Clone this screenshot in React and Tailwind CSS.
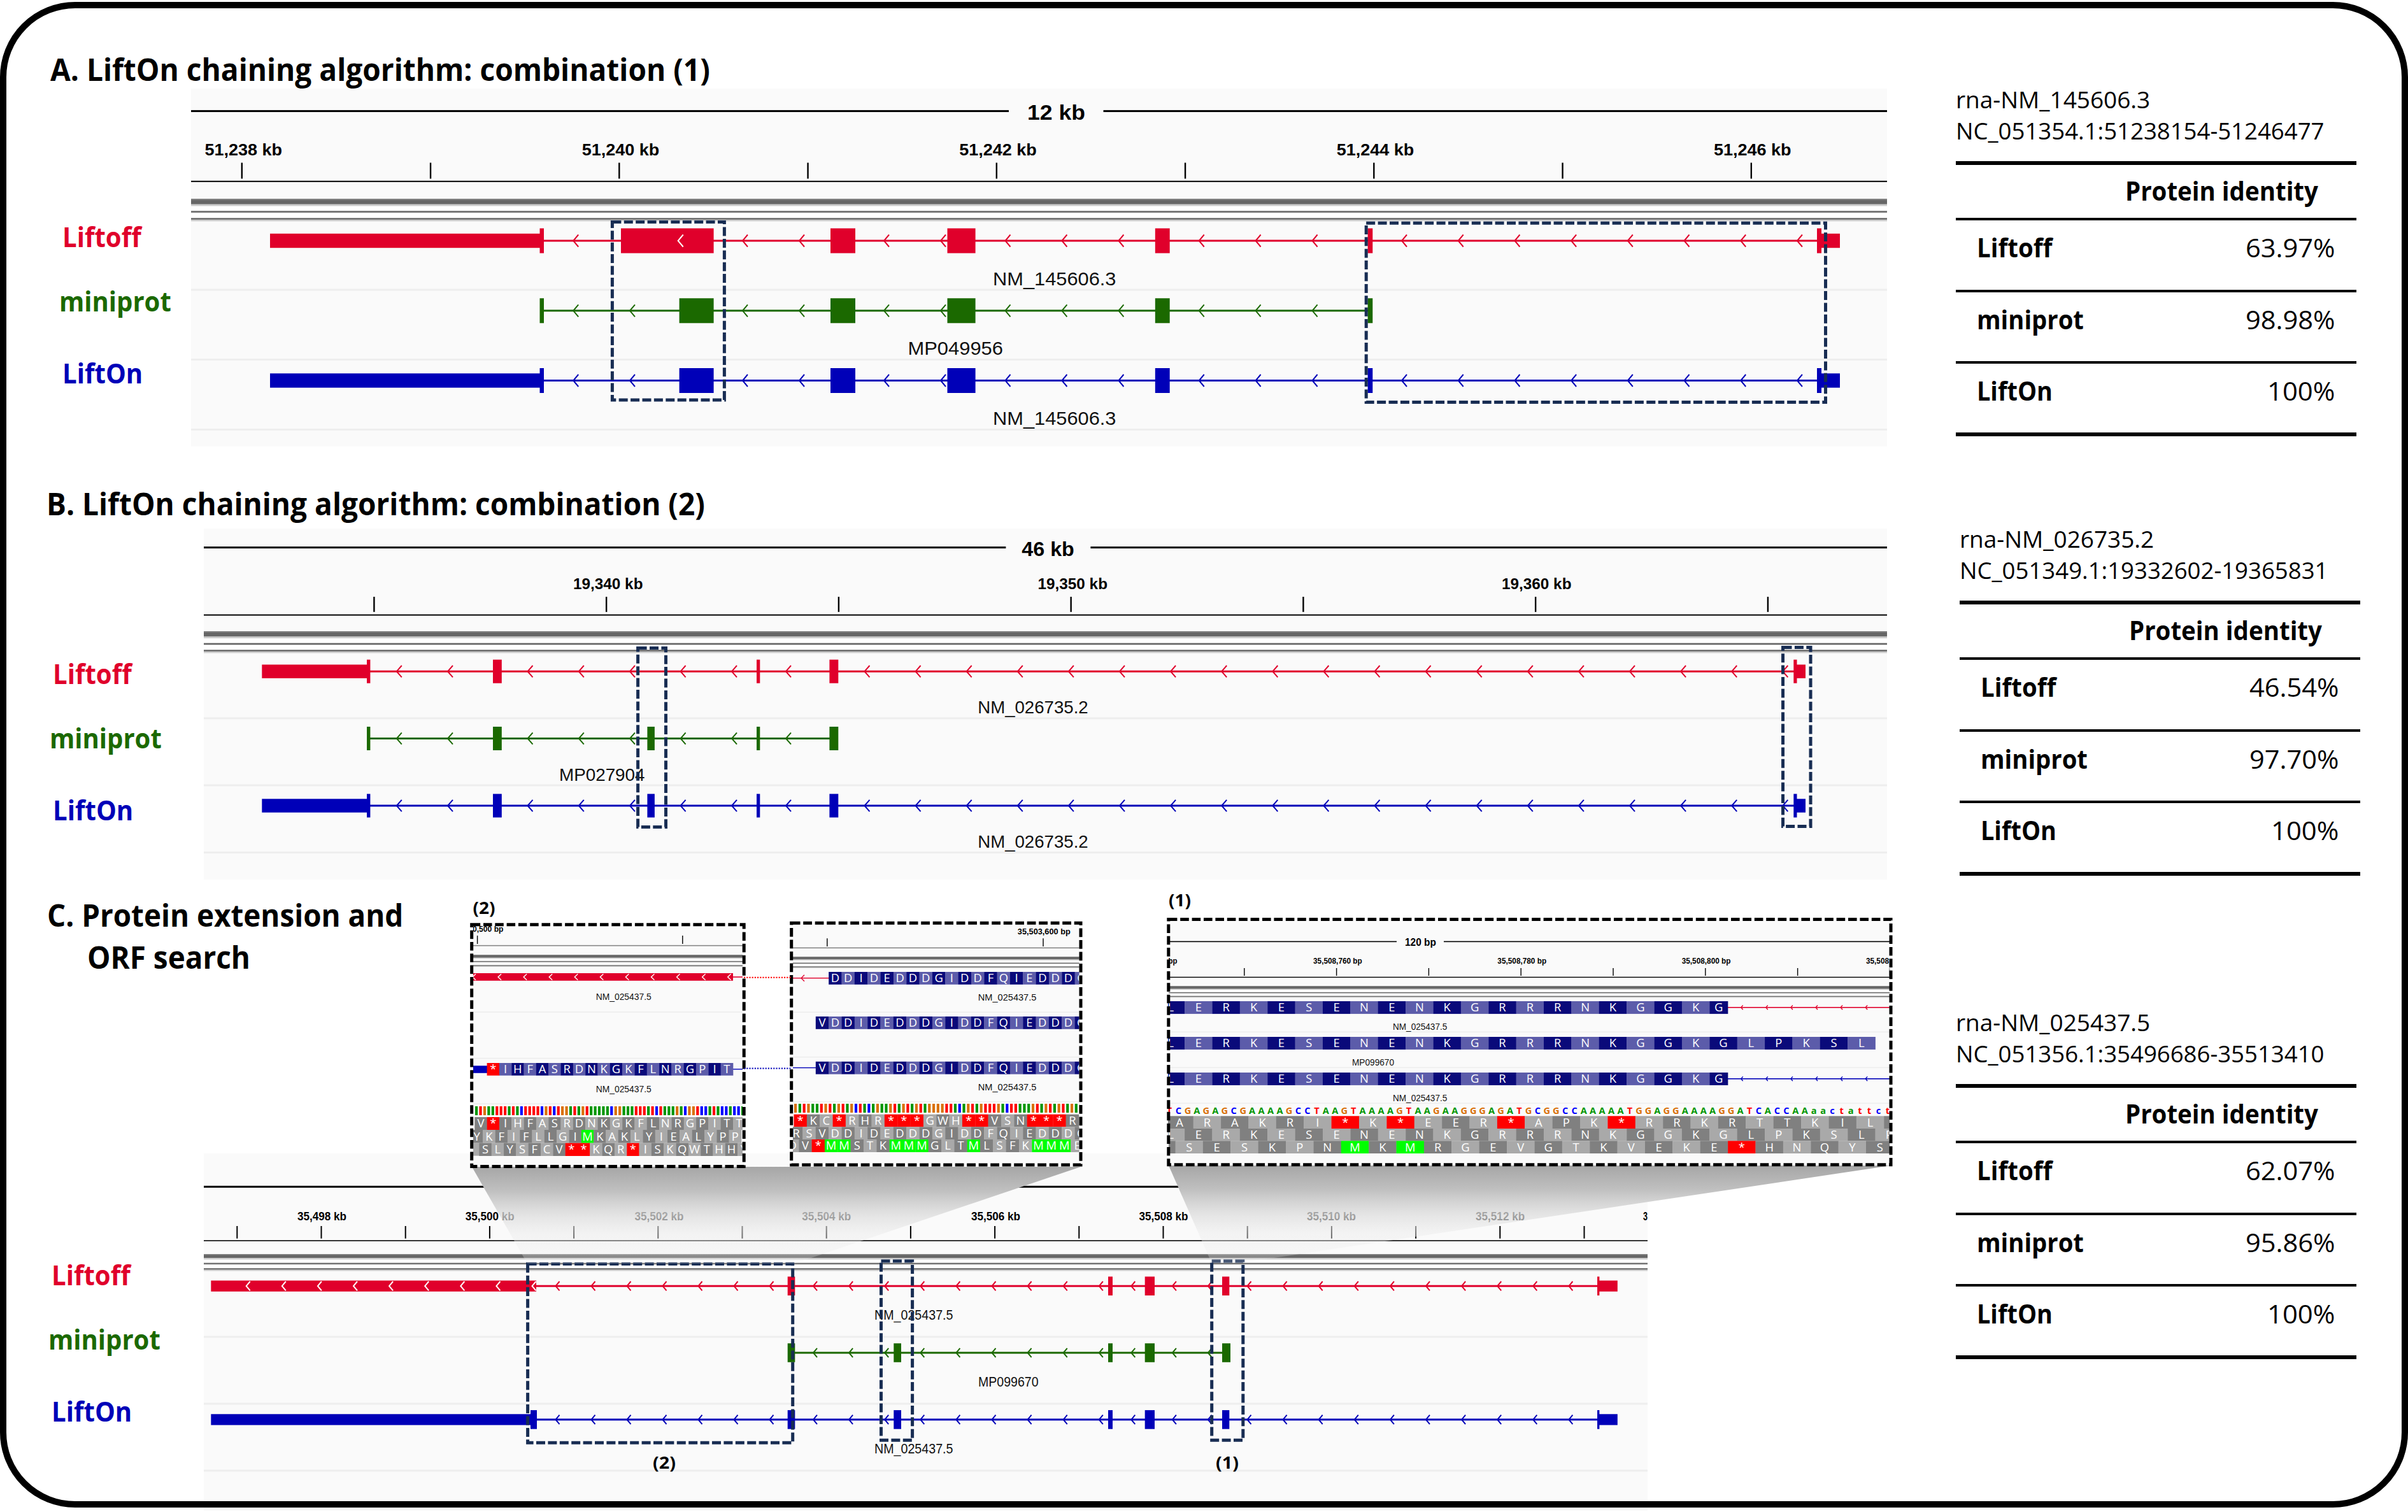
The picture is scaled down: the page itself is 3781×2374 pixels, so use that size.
import React, { useLayoutEffect, useRef, useState } from 'react';

const RED = '#e0002b';
const GREEN = '#1b6900';
const BLUE = '#0000b8';
const NAVY = '#182d53';

const BASE_COLORS = { A: '#009600', C: '#0000ff', G: '#d97008', T: '#ff0000' };

const series = (start, step, count) => Array.from({ length: count }, (_, i) => start + i * step);

// Condenses a label so that it takes up exactly the given width
const Fit = ({ width, className = '', children }) => {
    const ref = useRef(null);
    const [scale, setScale] = useState(1);

    useLayoutEffect(() => {
        setScale(width / ref.current.offsetWidth);
    }, [width, children]);

    return (
        <span className="inline-block whitespace-nowrap" style={{ width }}>
            <span ref={ref} className={`inline-block origin-left ${className}`} style={{ transform: `scaleX(${scale})` }}>
                {children}
            </span>
        </span>
    );
};

const Label = ({ x, y, w, size, bold, children }) => (
    <text
        x={x}
        y={y}
        fontSize={size}
        textLength={w}
        lengthAdjust="spacingAndGlyphs"
        className={bold ? "font-['Liberation_Sans',sans-serif] font-bold" : "font-['Liberation_Sans',sans-serif]"}
        fill={bold ? '#000' : '#111'}
    >
        {children}
    </text>
);

const Note = ({ x, y, w, children }) => (
    <text x={x} y={y} fontSize={27} textLength={w} lengthAdjust="spacingAndGlyphs" className="font-['Open_Sans',sans-serif] font-bold">
        {children}
    </text>
);

const HLine = ({ x1, x2, y, w = 2, color = '#000' }) => (
    <rect x={x1} y={y - w / 2} width={x2 - x1} height={w} fill={color} />
);

const Ticks = ({ xs, y1, y2, w = 2.4 }) =>
    xs.map((x) => <rect key={x} x={x - w / 2} y={y1} width={w} height={y2 - y1} fill="#000" />);

// Grey splitter bars between the ruler and the tracks
const Bars = ({ x1, x2, top, thick, second, third, w = 3 }) => (
    <g>
        <rect x={x1} y={top} width={x2 - x1} height={third - top} fill="#fff" />
        <rect x={x1} y={top} width={x2 - x1} height={thick + w} fill="#ccc" />
        <rect x={x1} y={top} width={x2 - x1} height={thick} fill="#666" />
        <rect x={x1} y={top} width={x2 - x1} height={thick / 4} fill="#828282" />
        <HLine x1={x1} x2={x2} y={second} w={w + 0.6} color="#bbb" />
        <HLine x1={x1} x2={x2} y={second} w={w / 1.8} color="#555" />
        <HLine x1={x1} x2={x2} y={third + w / 2} w={w * 1.6} color="#ccc" />
        <HLine x1={x1} x2={x2} y={third} w={w * 0.8} color="#666" />
    </g>
);

const Arrows = ({ xs, y, w, h, color, stroke = 2 }) =>
    xs.map((x) => (
        <path key={x} d={`M${x + w} ${y - h} L${x + 1} ${y} L${x + w} ${y + h}`} fill="none" stroke={color} strokeWidth={stroke} />
    ));

const Track = ({ y, color, line, utr = [], cds, arrows, white = [], uh, ch, aw, ah }) => (
    <g>
        <HLine x1={line[0]} x2={line[1]} y={y} w={3} color={color} />
        <Arrows xs={arrows} y={y} w={aw} h={ah} color={color} />
        {utr.map(([a, b]) => (
            <rect key={a} x={a} y={y - uh} width={b - a} height={uh * 2} fill={color} />
        ))}
        {cds.map(([a, b]) => (
            <rect key={a} x={a} y={y - ch} width={b - a} height={ch * 2} fill={color} />
        ))}
        <Arrows xs={white} y={y} w={aw} h={ah} color="#fff" />
    </g>
);

const DashBox = ({ x1, y1, x2, y2, color = NAVY, dash = '14 4.4', w = 5 }) => (
    <rect x={x1} y={y1} width={x2 - x1} height={y2 - y1} fill="none" stroke={color} strokeWidth={w} strokeDasharray={dash} />
);

// Amino acid cells; "*" is a stop codon, "M" a start codon in the frame rows
const Cells = ({ x, y, h, pitch, seq, colors, frame, lastWidth }) =>
    seq.split('').map((aa, i) => {
        const width = lastWidth && i === seq.length - 1 ? lastWidth : pitch;
        let fill = colors[i % 2];
        if (aa === '*') fill = '#ff0000';
        if (frame && aa === 'M') fill = '#00ff00';
        return (
            <g key={i}>
                <rect x={x + i * pitch} y={y} width={width + 0.3} height={h} fill={fill} />
                <text
                    x={x + i * pitch + width / 2}
                    y={y + h / 2 + 6.4}
                    fontSize={18.4}
                    textAnchor="middle"
                    fill="#fff"
                    className="font-['Open_Sans',sans-serif] font-medium"
                >
                    {aa}
                </text>
            </g>
        );
    });

const NAVY_CELLS = ['#0a0a7a', '#5c5caa'];
const DARK_FIRST = ['#808080', '#a9a9a9'];
const LIGHT_FIRST = ['#a9a9a9', '#808080'];

const BaseTicks = ({ x, y, h, pitch, seq }) =>
    seq.split('').map((b, i) => (
        <rect key={i} x={x + i * pitch} y={y} width={4.2} height={h} fill={BASE_COLORS[b]} />
    ));

const RowLines = ({ x1, x2, ys, w = 3 }) => ys.map((y) => <HLine key={y} x1={x1} x2={x2} y={y} w={w} color="#eeeeee" />);

/* ---------- Panel A ---------- */

const A_LEFT = [899.2];
const A_MID = [1165, 1254, 1387, 1476, 1577.5, 1666.4, 1755.4, 1881.7, 1970.6, 2059.6];
const A_RIGHT = series(2200, 88.7, 8);
const A_CDS = [[1304, 1343], [1487.5, 1531.6], [1813.8, 1836.7], [2147.6, 2155.3]];
const A_SIZE = { uh: 11.2, ch: 19.5, aw: 9, ah: 9.5 };

const PanelA = () => (
    <svg viewBox="300 139 2663 562" className="block h-[562px] w-[2663px] shrink-0">
        <rect x={300} y={139} width={2663} height={562} fill="#fafafa" />
        <HLine x1={300} x2={1584} y={174.4} w={3} />
        <HLine x1={1732.5} x2={2963} y={174.4} w={3} />
        <Label x={1613} y={188} w={91} size={34} bold>12 kb</Label>
        {[['51,238 kb', 321.5], ['51,240 kb', 913.8], ['51,242 kb', 1506.3], ['51,244 kb', 2098.8], ['51,246 kb', 2691]].map(([t, x]) => (
            <Label key={t} x={x} y={243.6} w={121.5} size={26} bold>{t}</Label>
        ))}
        <Ticks xs={series(379.8, 296.25, 9)} y1={255.5} y2={280.5} />
        <HLine x1={300} x2={2963} y={284.8} w={2} />
        <Bars x1={300} x2={2963} top={312} thick={8.5} second={332.5} third={343.5} />
        <RowLines x1={300} x2={2963} ys={[455, 564.6, 674.5]} />

        <Track
            y={378}
            color={RED}
            line={[850, 2870]}
            utr={[[424, 850], [2859, 2889]]}
            cds={[[847.5, 854], [975, 1120.6], ...A_CDS, [2853, 2860]]}
            arrows={[...A_LEFT, ...A_MID, ...A_RIGHT]}
            white={[1063.7]}
            {...A_SIZE}
        />
        <Track
            y={487.8}
            color={GREEN}
            line={[850, 2150]}
            cds={[[847.5, 854], [1066.6, 1120.6], ...A_CDS]}
            arrows={[...A_LEFT, 988, ...A_MID]}
            {...A_SIZE}
        />
        <Track
            y={597.5}
            color={BLUE}
            line={[850, 2870]}
            utr={[[424, 850], [2859, 2889]]}
            cds={[[847.5, 854], [1066.6, 1120.6], ...A_CDS, [2853, 2860]]}
            arrows={[...A_LEFT, 988, ...A_MID, ...A_RIGHT]}
            {...A_SIZE}
        />
        <Label x={1559} y={447.5} w={193.5} size={30}>NM_145606.3</Label>
        <Label x={1425.5} y={556.7} w={149.5} size={30}>MP049956</Label>
        <Label x={1559} y={667} w={193.5} size={30}>NM_145606.3</Label>
        <DashBox x1={961.4} y1={348.5} x2={1137.4} y2={628} />
        <DashBox x1={2145.2} y1={350.3} x2={2866.5} y2={631.4} />
    </svg>
);

/* ---------- Panel B ---------- */

const B_LEFT = [621.8, 702, 827.5, 907.8, 988, 1067.6, 1148, 1233];
const B_RIGHT = series(1356.5, 80.1, 19);
const B_CDS = [[576, 581.4], [774, 787.8], [1188, 1193.3], [1302.4, 1316.3]];
const B_SIZE = { uh: 10.7, ch: 18.5, aw: 9, ah: 9.2 };

const PanelB = () => (
    <svg viewBox="320 830 2643 551" className="block h-[551px] w-[2643px] shrink-0">
        <rect x={320} y={830} width={2643} height={551} fill="#fafafa" />
        <HLine x1={320} x2={1579.4} y={859.6} w={3} />
        <HLine x1={1712.4} x2={2963} y={859.6} w={3} />
        <Label x={1604.3} y={872.7} w={82.5} size={31} bold>46 kb</Label>
        {[['19,340 kb', 900], ['19,350 kb', 1629.5], ['19,360 kb', 2358]].map(([t, x]) => (
            <Label key={t} x={x} y={925.4} w={109.5} size={24} bold>{t}</Label>
        ))}
        <Ticks xs={series(587.4, 364.75, 7)} y1={937} y2={960.8} />
        <HLine x1={320} x2={2963} y={965.6} w={2} />
        <Bars x1={320} x2={2963} top={991} thick={8.2} second={1011} third={1021.5} />
        <RowLines x1={320} x2={2963} ys={[1127.8, 1233, 1338.5]} />

        <Track
            y={1054.2}
            color={RED}
            line={[578, 2820]}
            utr={[[411.3, 580], [2819, 2835]]}
            cds={[...B_CDS, [2816.3, 2821.5]]}
            arrows={[...B_LEFT, ...B_RIGHT]}
            {...B_SIZE}
        />
        <Track y={1159.5} color={GREEN} line={[578, 1310]} cds={[...B_CDS, [1016.4, 1027.9]]} arrows={B_LEFT} {...B_SIZE} />
        <Track
            y={1265}
            color={BLUE}
            line={[578, 2820]}
            utr={[[411.3, 580], [2819, 2835]]}
            cds={[...B_CDS, [1016.4, 1027.9], [2816.3, 2821.5]]}
            arrows={[...B_LEFT, ...B_RIGHT]}
            {...B_SIZE}
        />
        <Label x={1535.2} y={1120.3} w={173.5} size={28}>NM_026735.2</Label>
        <Label x={878} y={1225.7} w={134.5} size={28}>MP027904</Label>
        <Label x={1535.2} y={1330.8} w={173.5} size={28}>NM_026735.2</Label>
        <DashBox x1={1001.6} y1={1017.4} x2={1045.5} y2={1298.5} />
        <DashBox x1={2799.5} y1={1016.4} x2={2843} y2={1297.6} />
    </svg>
);

/* ---------- Panel C ---------- */

const C_ARROWS_1 = series(871.5, 56, 7);
const C_ARROWS_2 = [...series(1276, 56.1, 9), 1775.3, 1839.9, 1895.8];
const C_ARROWS_3 = series(1957.5, 56.1, 10);
const C_SIZE = { uh: 8.6, ch: 14.8, aw: 7, ah: 7.2 };

const GenomeView = () => (
    <g>
        <rect x={320} y={1811} width={2267} height={561} fill="#fafafa" />
        <HLine x1={320} x2={2587} y={1863.3} w={3} />
        {[505.4, 769.3, 1034.9, 1297.8, 1563.5, 1827, 2090.4, 2355.6].map((c, i) => (
            <Label key={c} x={c - 38.5} y={1916.4} w={77} size={19.2} bold>{`35,${498 + i * 2} kb`}</Label>
        ))}
        <Label x={2580} y={1916.4} w={7} size={19.2} bold>3</Label>
        <Ticks xs={series(372.3, 132.2, 17)} y1={1925} y2={1944.6} w={2} />
        <HLine x1={320} x2={2587} y={1948} w={2} color="#333" />
        <Bars x1={320} x2={2587} top={1969} thick={6} second={1984} third={1992.3} w={2.5} />
        <RowLines x1={320} x2={2587} ys={[2099, 2204, 2309]} />

        <Track
            y={2019.2}
            color={RED}
            line={[840, 2512]}
            utr={[[331.3, 842], [2510.5, 2539.8]]}
            cds={[[1236.7, 1248.3], [1740, 1747], [1797.7, 1813], [1919, 1930.3], [2508, 2511.4]]}
            arrows={[...C_ARROWS_1, ...C_ARROWS_2, ...C_ARROWS_3]}
            white={series(385.7, 56.1, 9)}
            {...C_SIZE}
        />
        <Track
            y={2124}
            color={GREEN}
            line={[1240, 1925]}
            cds={[[1236.7, 1248.3], [1403.3, 1415], [1740, 1747], [1797.7, 1813], [1919, 1932]]}
            arrows={C_ARROWS_2}
            {...C_SIZE}
        />
        <Track
            y={2228.9}
            color={BLUE}
            line={[840, 2512]}
            utr={[[331.3, 842], [2510.5, 2539.8]]}
            cds={[[833, 843], [1236.7, 1248.3], [1403.3, 1415], [1740, 1747], [1797.7, 1813], [1919, 1930.3], [2508, 2511.4]]}
            arrows={[...C_ARROWS_1, ...C_ARROWS_2, ...C_ARROWS_3]}
            {...C_SIZE}
        />
        <Label x={1373} y={2071.7} w={123.5} size={21.5}>NM_025437.5</Label>
        <Label x={1536} y={2176.7} w={94.5} size={21.5}>MP099670</Label>
        <Label x={1373} y={2281.8} w={123.5} size={21.5}>NM_025437.5</Label>
        <DashBox x1={828.6} y1={1984.5} x2={1244.7} y2={2265.3} />
        <DashBox x1={1383.5} y1={1980} x2={1432.6} y2={2261.3} />
        <DashBox x1={1902.7} y1={1980} x2={1951.8} y2={2261.3} />
        <Note x={1025} y={2306} w={36}>(2)</Note>
        <Note x={1909} y={2306} w={36}>(1)</Note>
    </g>
);

const InsetStop = () => (
    <g>
        <rect x={741} y={1452} width={427} height={380} fill="#fafafa" />
        <g clipPath="url(#clipStop)">
            <Label x={742} y={1463.3} w={48.5} size={12.6} bold>0,500 bp</Label>
            <Ticks xs={[749.6, 1071.8]} y1={1469} y2={1482} w={1.4} />
            <HLine x1={741} x2={1168} y={1484.7} w={1.6} color="#888" />
            <Bars x1={741} x2={1168} top={1499} thick={4.5} second={1509.8} third={1516} w={1.6} />
            <RowLines x1={741} x2={1168} ys={[1589, 1661.7, 1733]} w={1.6} />
            <rect x={741} y={1528} width={410} height={11.8} fill={RED} />
            <HLine x1={1151} x2={1168} y={1534} w={1.6} color={RED} />
            <Arrows xs={series(741, 40.07, 11)} y={1534} w={6} h={4.8} color="#fff" stroke={1.4} />
            <Label x={935.7} y={1570.3} w={87} size={14.4}>NM_025437.5</Label>
            <rect x={741} y={1673.3} width={24} height={11.5} fill={BLUE} />
            <HLine x1={1151} x2={1168} y={1678.7} w={1.4} color={BLUE} />
            <Cells x={764.6} y={1669} h={19.7} pitch={19.32} seq="*IHFASRDNKGKFLNRGPIT" colors={NAVY_CELLS} />
            <Label x={935.7} y={1715.3} w={87} size={14.4}>NM_025437.5</Label>
            <rect x={741} y={1736} width={427} height={16} fill="#fff" />
            <BaseTicks
                x={746}
                y={1737}
                h={14}
                pitch={6.43}
                seq="ATGAATTTATACTTTTCGTCTGGATAGTAAAAACGGAAATTTATCTAAAGACGGTCCATACCACCA"
            />
            <Cells x={745.3} y={1754} h={20} pitch={19.32} seq="V*IHFASRDNKGKFLNRGPITT" colors={DARK_FIRST} frame />
            <Cells x={738.9} y={1774} h={20.7} pitch={19.32} seq="YKFIFLLGIMKAKLYIEALYPP" colors={DARK_FIRST} frame />
            <rect x={741} y={1794.7} width={12} height={20} fill="#a9a9a9" />
            <Cells x={752.4} y={1794.7} h={20.3} pitch={19.32} seq="SLYSFCV**KQR*ISKQWTHHY" colors={DARK_FIRST} frame />
        </g>
        <DashBox x1={740.7} y1={1451.7} x2={1168.2} y2={1831.5} color="#000" dash="13.5 4.8" />
        <Note x={742.5} y={1434.5} w={35}>(2)</Note>
    </g>
);

const InsetDonor = () => (
    <g>
        <rect x={1243} y={1449} width={454} height={380} fill="#fafafa" />
        <g clipPath="url(#clipDonor)">
            <Label x={1597.8} y={1466.7} w={83} size={12.8} bold>35,503,600 bp</Label>
            <Ticks xs={[1298.8, 1638]} y1={1473.3} y2={1486} w={1.4} />
            <HLine x1={1243} x2={1697} y={1488.3} w={1.6} color="#888" />
            <Bars x1={1243} x2={1697} top={1502} thick={4.2} second={1512.3} third={1518} w={1.6} />
            <RowLines x1={1243} x2={1697} ys={[1589.3, 1659.7, 1730]} w={1.6} />
            <HLine x1={1243} x2={1302} y={1535.7} w={1.4} color={RED} />
            <Arrows xs={[1257]} y={1535.7} w={6} h={5} color={RED} stroke={1.3} />
            <Cells x={1301.2} y={1526} h={19.8} pitch={20.34} seq="DDIDEDDDGIDDFQIEDDDG" colors={NAVY_CELLS} />
            <Label x={1535.8} y={1571.3} w={91.6} size={14.6}>NM_025437.5</Label>
            <Cells x={1280.8} y={1596} h={19.8} pitch={20.34} seq="VDDIDEDDDGIDDFQIEDDDG" colors={NAVY_CELLS} />
            <HLine x1={1243} x2={1281} y={1676.5} w={1.4} color={BLUE} />
            <Cells x={1280.8} y={1666.8} h={19.8} pitch={20.34} seq="VDDIDEDDDGIDDFQIEDDDG" colors={NAVY_CELLS} />
            <Label x={1535.8} y={1712.3} w={91.6} size={14.6}>NM_025437.5</Label>
            <rect x={1243} y={1732} width={454} height={16} fill="#fff" />
            <BaseTicks
                x={1247}
                y={1733}
                h={14}
                pitch={6.78}
                seq="GATGAATGTAGTAGCTACAGAAGTAGTAGTAGGGGTTACAGTAGTTTGACTTAAAGTAGTAGTAGAG"
            />
            <Cells x={1246.5} y={1749.7} h={19.7} pitch={20.34} seq="*KC*RHR***GWH**VSN***R" colors={LIGHT_FIRST} frame />
            <Cells x={1240.1} y={1769.3} h={19.7} pitch={20.34} seq="RSVDDIDEDDDGIDDFQIEDDDG" colors={DARK_FIRST} frame />
            <Cells x={1233.9} y={1789} h={20} pitch={20.34} seq="DV*MMSTKMMMGLTMLSFKMMME" colors={LIGHT_FIRST} frame />
        </g>
        <DashBox x1={1242.7} y1={1449.3} x2={1697} y2={1829} color="#000" dash="13.8 4.7" />
    </g>
);

const PROTEIN = 'LERKESENENKGRRRNKGGKG';
const DNA = 'TCGAGAGCGAAAAGCCTAAGTAAAAGTAAGAAGGGAGATGCGGCCAAAAATGGAGGAAAAGGATCACCAAaactattct';

const InsetStart = () => (
    <g>
        <rect x={1835} y={1443} width={1134} height={386} fill="#fafafa" />
        <g clipPath="url(#clipStart)">
            <HLine x1={1835} x2={2193} y={1478.4} w={1.6} />
            <HLine x1={2267} x2={2969} y={1478.4} w={1.6} />
            <Label x={2206} y={1484.7} w={49} size={16} bold>120 bp</Label>
            <Label x={1834.5} y={1513.3} w={14} size={13} bold>bp</Label>
            {['760', '780', '800'].map((n, i) => (
                <Label key={n} x={2062 + i * 289.35} y={1513.3} w={76.8} size={13} bold>{`35,508,${n} bp`}</Label>
            ))}
            <Label x={2930} y={1513.3} w={36} size={13} bold>35,508</Label>
            <Ticks xs={series(1953.8, 144.8, 8)} y1={1520} y2={1532} w={1.4} />
            <HLine x1={1835} x2={2969} y={1534.4} w={1.4} />
            <Bars x1={1835} x2={2969} top={1548} thick={4.4} second={1558.7} third={1564.4} w={1.6} />
            <RowLines x1={1835} x2={2969} ys={[1620.3, 1676.3, 1732.3]} w={1.6} />

            <HLine x1={2713} x2={2969} y={1581.8} w={1.6} color={RED} />
            <Arrows xs={series(2732.7, 39.1, 6)} y={1581.8} w={4} h={3.4} color={RED} stroke={1.4} />
            <Cells x={1816.7} y={1572} h={19.9} pitch={43.38} seq={PROTEIN} colors={NAVY_CELLS} lastWidth={28.7} />
            <Label x={2187} y={1616.7} w={85.3} size={14}>NM_025437.5</Label>

            <Cells x={1816.7} y={1628} h={19.9} pitch={43.38} seq={`${PROTEIN}LPKSL`} colors={NAVY_CELLS} />
            <Label x={2123} y={1672.7} w={66} size={14}>MP099670</Label>

            <HLine x1={2713} x2={2969} y={1693.8} w={1.6} color={BLUE} />
            <Arrows xs={series(2732.7, 39.1, 6)} y={1693.8} w={4} h={3.4} color={BLUE} stroke={1.4} />
            <Cells x={1816.7} y={1684} h={19.9} pitch={43.38} seq={PROTEIN} colors={NAVY_CELLS} lastWidth={28.7} />
            <Label x={2187} y={1728.7} w={85.3} size={14}>NM_025437.5</Label>

            {DNA.split('').map((b, i) => (
                <text
                    key={i}
                    x={1836 + i * 14.46}
                    y={1749.3}
                    fontSize={14.6}
                    textAnchor="middle"
                    fill={BASE_COLORS[b.toUpperCase()]}
                    className="font-['Open_Sans',sans-serif] font-bold"
                >
                    {b}
                </text>
            ))}
            <Cells x={1830.3} y={1752.3} h={19.8} pitch={43.38} seq="ARAKRI*K*EER*APK*RRKRTTKIL " colors={DARK_FIRST} frame />
            <Cells x={1816.7} y={1772} h={19.4} pitch={43.38} seq={`${PROTEIN}LPKSLP`} colors={LIGHT_FIRST} frame />
            <rect x={1835} y={1791.3} width={11} height={19.7} fill="#808080" />
            <Cells x={1845.5} y={1791.3} h={19.7} pitch={43.38} seq="SESKPNMKMRGEVGTKVEKE*HNQYS" colors={LIGHT_FIRST} frame />
        </g>
        <DashBox x1={1834.8} y1={1443.5} x2={2969} y2={1828.8} color="#000" dash="13.6 4.8" />
        <Note x={1835} y={1422.7} w={35}>(1)</Note>
    </g>
);

const PanelC = () => (
    <svg viewBox="320 1390 2660 984" className="block h-[984px] w-[2660px] shrink-0">
        <defs>
            <linearGradient id="beam" x1="0" y1="0" x2="0" y2="1">
                <stop offset="0" stopColor="#a6a6a6" />
                <stop offset="0.25" stopColor="#c0c0c0" />
                <stop offset="0.5" stopColor="#dcdcdc" stopOpacity="0.75" />
                <stop offset="0.7" stopColor="#ececec" stopOpacity="0.5" />
                <stop offset="1" stopColor="#eeeeee" stopOpacity="0.2" />
            </linearGradient>
            <clipPath id="clipStop"><rect x={743} y={1453} width={423} height={378} /></clipPath>
            <clipPath id="clipDonor"><rect x={1245} y={1451} width={449.6} height={378} /></clipPath>
            <clipPath id="clipStart"><rect x={1834} y={1444} width={1133.2} height={384} /></clipPath>
        </defs>
        <GenomeView />
        <polygon points="741,1832 1697,1832 1247,1984 828,1984" fill="url(#beam)" />
        <polygon points="1835,1830 2969,1830 1953,1982 1902,1982" fill="url(#beam)" />
        <InsetStop />
        <InsetDonor />
        <InsetStart />
        <path d="M1168 1534.7 H1243" stroke="#ff0000" strokeWidth={2} strokeDasharray="2.2 2" />
        <path d="M1168 1677.4 H1243" stroke={BLUE} strokeWidth={2} strokeDasharray="2.2 2" />
    </svg>
);

/* ---------- Identity tables ---------- */

const Row = ({ name, width, value, valueWidth, last }) => (
    <div className={`flex justify-between border-black pt-[12px] pr-[34px] pl-[33px] text-[41px] leading-[60px] ${last ? 'h-[114px] border-b-[6px]' : 'h-[112.5px] border-b-[4px]'}`}>
        <Fit width={width} className="font-bold">{name}</Fit>
        <Fit width={valueWidth}>{value}</Fit>
    </div>
);

const IdentityTable = ({ id, region, values, className }) => (
    <div className={`w-[629px] shrink-0 ${className}`}>
        <div className="text-[36px] leading-[49px]">
            <div><Fit width={305}>{id}</Fit></div>
            <div><Fit width={578}>{region}</Fit></div>
        </div>
        <div className="mt-[23px] flex h-[93px] justify-end border-t-[6px] border-b-[4px] border-black pt-[10px] pr-[60px] text-[41px] leading-[60px]">
            <Fit width={303} className="font-bold">Protein identity</Fit>
        </div>
        <Row name="Liftoff" width={118} value={values[0]} valueWidth={140} />
        <Row name="miniprot" width={168} value={values[1]} valueWidth={140} />
        <Row name="LiftOn" width={119} value={values[2]} valueWidth={106} last />
    </div>
);

const TrackNames = ({ className, gaps }) => (
    <div className={`flex flex-col text-[43px] leading-[60px] font-bold ${className}`}>
        <div className="pl-[5px] text-[#e0002b]"><Fit width={124}>Liftoff</Fit></div>
        <div className={`text-[#1b6900] ${gaps[0]}`}><Fit width={176}>miniprot</Fit></div>
        <div className={`pl-[5px] text-[#0000b8] ${gaps[1]}`}><Fit width={126}>LiftOn</Fit></div>
    </div>
);

export default function App() {
    return (
        <div className="relative flex h-[2374px] w-[3781px] overflow-hidden bg-white font-['Open_Sans',sans-serif] text-black">
            <div className="flex w-[3071px] shrink-0 flex-col">
                <section className="h-[740px] pt-[79px]">
                    <h2 className="pl-[79px] text-[48px] leading-[60px] font-bold">
                        <Fit width={1036}>A. LiftOn chaining algorithm: combination (1)</Fit>
                    </h2>
                    <div className="flex">
                        <TrackNames className="w-[300px] shrink-0 pt-[203px] pl-[93px]" gaps={['mt-[41px]', 'mt-[53px]']} />
                        <PanelA />
                    </div>
                </section>

                <section className="h-[650px] pt-[21px]">
                    <h2 className="pl-[73px] text-[48px] leading-[60px] font-bold">
                        <Fit width={1034}>B. LiftOn chaining algorithm: combination (2)</Fit>
                    </h2>
                    <div className="mt-[9px] flex">
                        <TrackNames className="w-[320px] shrink-0 pt-[198px] pl-[78px]" gaps={['mt-[41px]', 'mt-[53px]']} />
                        <PanelB />
                    </div>
                </section>

                <section className="flex h-[984px]">
                    <div className="w-[320px] shrink-0 pt-[14px]">
                        <h2 className="pl-[74px] text-[48px] leading-[66px] font-bold whitespace-nowrap">
                            <div><Fit width={559}>C. Protein extension and</Fit></div>
                            <div className="pl-[63px]"><Fit width={256}>ORF search</Fit></div>
                        </h2>
                        <TrackNames className="pt-[436px] pl-[76px]" gaps={['mt-[41px]', 'mt-[53px]']} />
                    </div>
                    <PanelC />
                </section>
            </div>

            <aside className="flex flex-col">
                <IdentityTable
                    className="mt-[132px]"
                    id="rna-NM_145606.3"
                    region="NC_051354.1:51238154-51246477"
                    values={['63.97%', '98.98%', '100%']}
                />
                <IdentityTable
                    className="mt-[137px] ml-[6px]"
                    id="rna-NM_026735.2"
                    region="NC_051349.1:19332602-19365831"
                    values={['46.54%', '97.70%', '100%']}
                />
                <IdentityTable
                    className="mt-[206px]"
                    id="rna-NM_025437.5"
                    region="NC_051356.1:35496686-35513410"
                    values={['62.07%', '95.86%', '100%']}
                />
            </aside>

            <div className="pointer-events-none absolute inset-x-0 top-[3px] h-[2364px] rounded-[118px] border-[10px] border-black" />
        </div>
    );
}
